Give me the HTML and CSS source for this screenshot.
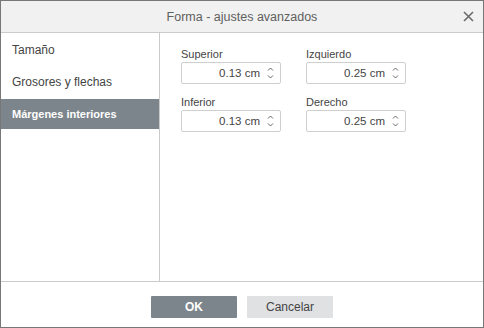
FILE: index.html
```html
<!DOCTYPE html>
<html lang="es">
<head>
<meta charset="utf-8">
<title>Forma - ajustes avanzados</title>
<link rel="stylesheet" href="styles.css">
</head>
<body>
<div class="dialog">
  <div class="header">
    <span class="title">Forma - ajustes avanzados</span>
    <span class="close" aria-label="Cerrar">
      <svg width="11" height="11" viewBox="0 0 11 11"><path d="M1 1 L10 10 M10 1 L1 10" stroke="#6b6b6b" stroke-width="1.6" fill="none"/></svg>
    </span>
  </div>
  <div class="body">
    <div class="sidebar">
      <div class="item">Tamaño</div>
      <div class="item">Grosores y flechas</div>
      <div class="item active">Márgenes interiores</div>
    </div>
    <div class="content">
      <div class="grid">
        <div class="field">
          <div class="label">Superior</div>
          <div class="spin"><span class="value">0.13 cm</span><span class="arrows"><svg width="7" height="14" viewBox="0 0 7 14"><path d="M1 4.5 L3.5 2 L6 4.5 M1 9.5 L3.5 12 L6 9.5" stroke="#555" stroke-width="0.9" fill="none"/></svg></span></div>
        </div>
        <div class="field">
          <div class="label">Izquierdo</div>
          <div class="spin"><span class="value">0.25 cm</span><span class="arrows"><svg width="7" height="14" viewBox="0 0 7 14"><path d="M1 4.5 L3.5 2 L6 4.5 M1 9.5 L3.5 12 L6 9.5" stroke="#555" stroke-width="0.9" fill="none"/></svg></span></div>
        </div>
        <div class="field">
          <div class="label">Inferior</div>
          <div class="spin"><span class="value">0.13 cm</span><span class="arrows"><svg width="7" height="14" viewBox="0 0 7 14"><path d="M1 4.5 L3.5 2 L6 4.5 M1 9.5 L3.5 12 L6 9.5" stroke="#555" stroke-width="0.9" fill="none"/></svg></span></div>
        </div>
        <div class="field">
          <div class="label">Derecho</div>
          <div class="spin"><span class="value">0.25 cm</span><span class="arrows"><svg width="7" height="14" viewBox="0 0 7 14"><path d="M1 4.5 L3.5 2 L6 4.5 M1 9.5 L3.5 12 L6 9.5" stroke="#555" stroke-width="0.9" fill="none"/></svg></span></div>
        </div>
      </div>
    </div>
  </div>
  <div class="footer">
    <button class="btn primary">OK</button>
    <button class="btn secondary">Cancelar</button>
  </div>
</div>
</body>
</html>
```
FILE: styles.css
```css
* { box-sizing: border-box; }
html, body { margin: 0; padding: 0; }
body {
  font-family: "Liberation Sans", Arial, sans-serif;
  font-size: 11px;
  color: #444;
  background: #fff;
}
.dialog {
  width: 484px;
  height: 328px;
  border: 1px solid #777;
  display: flex;
  flex-direction: column;
  background: #fff;
}
.header {
  height: 32px;
  flex: none;
  background: #f1f1f1;
  border-bottom: 1px solid #cbcbcb;
  display: flex;
  align-items: center;
  justify-content: center;
  position: relative;
}
.title {
  font-size: 12.5px;
  color: #5f5f5f;
  padding-top: 1px;
}
.close {
  position: absolute;
  right: 9px;
  top: 10px;
  width: 11px;
  height: 11px;
  display: flex;
}
.body {
  flex: 1;
  display: flex;
  min-height: 0;
}
.sidebar {
  width: 159px;
  flex: none;
  border-right: 1px solid #cbcbcb;
  padding-top: 2px;
  display: flex;
  flex-direction: column;
  gap: 2px;
}
.item {
  height: 30px;
  display: flex;
  align-items: center;
  padding-left: 11px;
  color: #444;
  font-size: 12px;
}
.item.active {
  background: #7d858c;
  color: #fff;
  font-weight: bold;
  font-size: 11px;
}
.content {
  flex: 1;
  padding: 15px 0 0 21px;
}
.grid {
  display: grid;
  grid-template-columns: 100px 100px;
  column-gap: 25px;
  row-gap: 12px;
}
.label {
  height: 13px;
  line-height: 13px;
  margin-bottom: 1px;
  color: #444;
  font-size: 11px;
}
.spin {
  height: 22px;
  border: 1px solid #cfcfcf;
  border-radius: 2px;
  display: flex;
  align-items: center;
  justify-content: flex-end;
  padding-right: 6px;
}
.value {
  font-size: 11.5px;
  color: #444;
  margin-right: 7px;
}
.arrows {
  display: flex;
  width: 7px;
  height: 14px;
}
.footer {
  height: 46px;
  flex: none;
  border-top: 1px solid #cbcbcb;
  display: flex;
  justify-content: center;
  align-items: flex-start;
  padding-top: 14px;
  gap: 10px;
}
.btn {
  width: 86px;
  height: 22px;
  border: none;
  border-radius: 1px;
  font-family: "Liberation Sans", Arial, sans-serif;
  font-size: 12px;
  padding: 0;
}
.primary {
  background: #7d858c;
  color: #fff;
  font-weight: bold;
}
.secondary {
  background: #dfe1e3;
  color: #444;
}
```
